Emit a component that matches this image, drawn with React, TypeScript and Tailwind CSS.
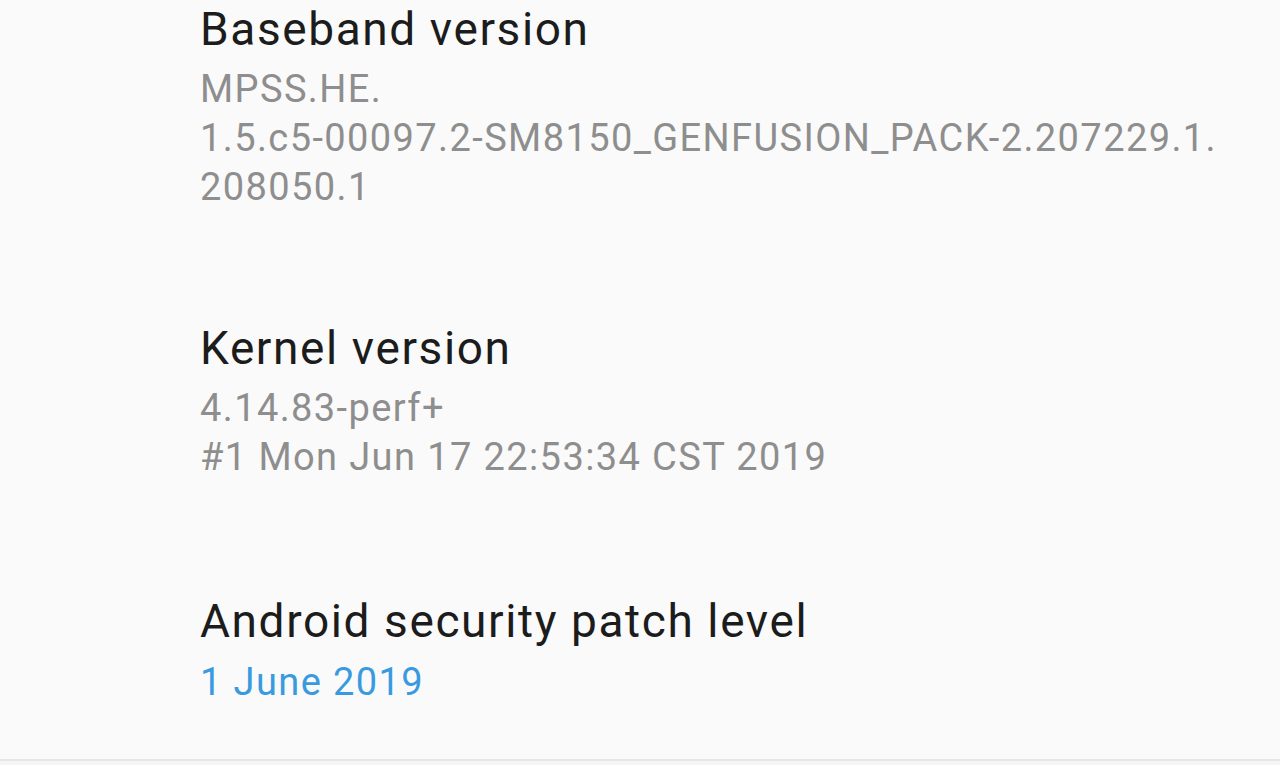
export default function App() {
  const title = "text-[46px] leading-[52px] tracking-[1.6px] text-[#1c1c1c]";
  const sub = "mt-[10px] text-[38px] leading-[49px] tracking-[1.4px] text-[#8e8e8e]";
  return (
    <div
      className="w-[1280px] h-[765px] bg-[#fafafa] overflow-hidden flex flex-col"
      style={{ fontFamily: "Roboto, 'Noto Sans', sans-serif" }}
    >
      <div className="flex-1 pl-[200px] pt-[3px] flex flex-col">
        <div className="flex flex-col">
          <div className={title}>Baseband version</div>
          <div className={sub}>
            MPSS.HE.
            <br />
            1.5.c5-00097.2-SM8150_GENFUSION_PACK-2.207229.1.
            <br />
            208050.1
          </div>
        </div>
        <div className="flex flex-col mt-[110px]">
          <div className={title}>Kernel version</div>
          <div className={sub}>
            4.14.83-perf+
            <br />
            #1 Mon Jun 17 22:53:34 CST 2019
          </div>
        </div>
        <div className="flex flex-col mt-[113px]">
          <div className={title}>Android security patch level</div>
          <div className="mt-[11px] text-[38px] leading-[49px] tracking-[1.4px] text-[#3a9ae0]">
            1 June 2019
          </div>
        </div>
      </div>
      <div className="h-[6px] border-t-2 border-[#e6e6e6] bg-[#f5f5f5]" />
    </div>
  );
}
